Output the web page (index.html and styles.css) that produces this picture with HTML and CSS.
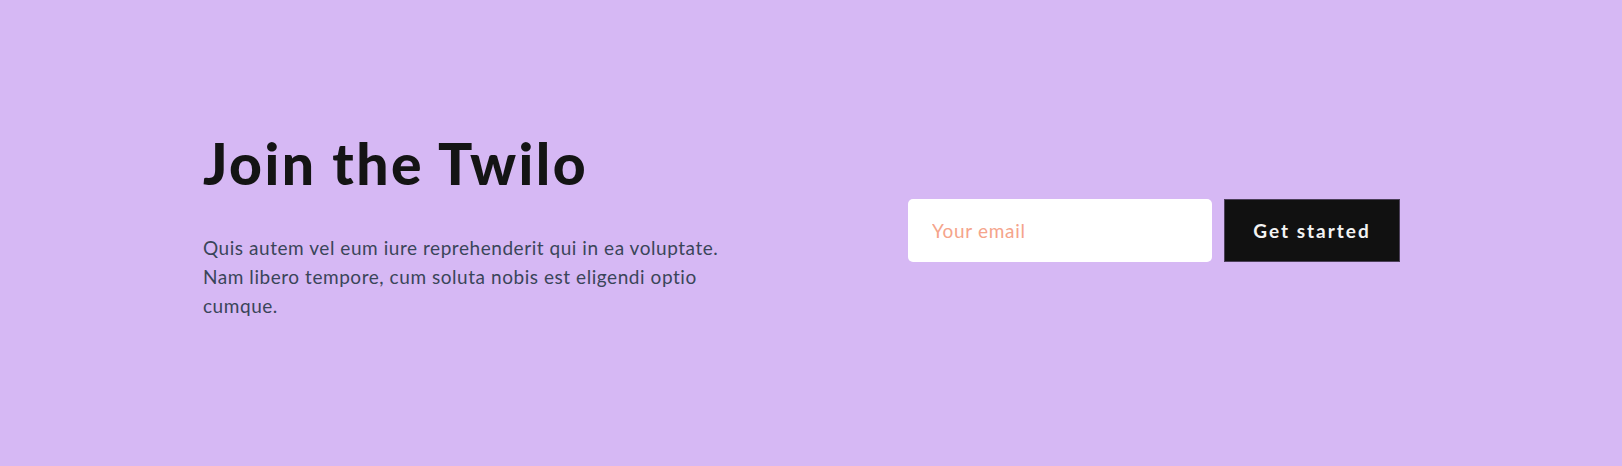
FILE: index.html
```html
<!DOCTYPE html>
<html lang="en">
<head>
<meta charset="utf-8">
<title>Join the Twilo</title>
<link rel="stylesheet" href="styles.css">
</head>
<body>
<section class="cta">
  <div class="intro">
    <h1 class="title">Join the Twilo</h1>
    <p class="lead">Quis autem vel eum iure reprehenderit qui in ea voluptate. Nam libero tempore, cum soluta nobis est eligendi optio cumque.</p>
  </div>
  <form class="signup">
    <input class="email" type="email" placeholder="Your email">
    <button class="submit" type="button">Get started</button>
  </form>
</section>
</body>
</html>
```

FILE: styles.css
```css
* { box-sizing: border-box; }
html, body { margin: 0; padding: 0; }
body {
  background: #d6b8f4;
  font-family: Lato, "Noto Sans", sans-serif;
  height: 466px;
  overflow: hidden;
}
.cta {
  display: flex;
  align-items: flex-start;
  padding: 130px 0 0 203px;
}
.intro {
  width: 705px;
  flex: 0 0 705px;
}
.title {
  margin: 0;
  font-size: 57px;
  line-height: 67px;
  font-weight: 900;
  color: #141414;
  letter-spacing: 2.4px;
}
.lead {
  margin: 36px 0 0;
  width: 530px;
  font-size: 19px;
  line-height: 29px;
  letter-spacing: 0.55px;
  color: #3a4559;
}
.signup {
  display: flex;
  gap: 12px;
  margin-top: 69px;
}
.email {
  width: 304px;
  height: 63px;
  border: 0;
  border-radius: 5px;
  background: #ffffff;
  padding: 0 24px;
  font-family: inherit;
  font-size: 19px;
  letter-spacing: 0.7px;
  color: #333;
  outline: none;
}
.email::placeholder { color: #f5a48b; }
.submit {
  width: 176px;
  height: 63px;
  border: 1px solid #4b3f59;
  background: #111111;
  color: #f3f3f3;
  font-family: inherit;
  font-size: 19px;
  font-weight: 700;
  letter-spacing: 2px;
  padding-bottom: 2px;
  cursor: pointer;
}
```
